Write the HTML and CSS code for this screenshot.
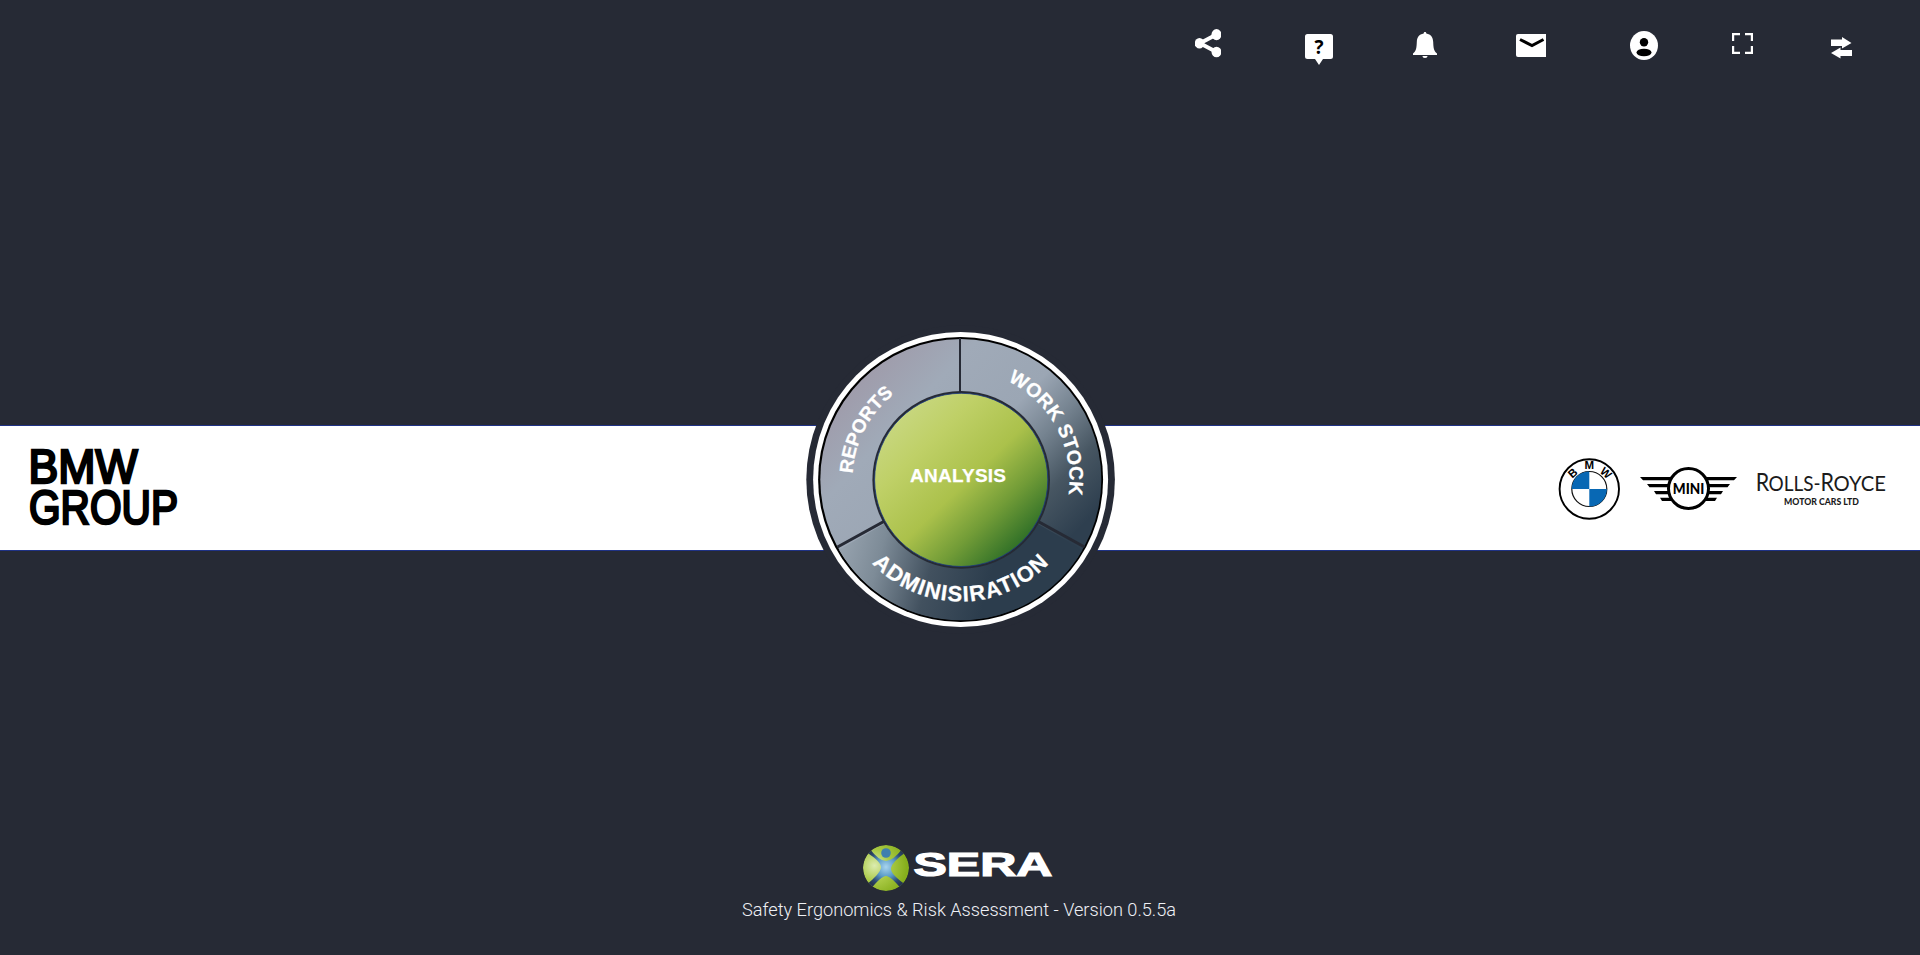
FILE: index.html
```html
<!DOCTYPE html>
<html lang="en">
<head>
<meta charset="utf-8">
<title>SERA</title>
<link rel="stylesheet" href="styles.css">
</head>
<body>
<div class="page">
  <header class="toolbar">
    <svg class="icon icon-share" width="26" height="29" viewBox="0 0 26 29"><path d="M21.500 5.500 5 14.300 21.500 23" fill="none" stroke="#fff" stroke-width="4"/><ellipse cx="4.500" cy="14.300" rx="4.800" ry="5.300"/><ellipse cx="21.500" cy="5.600" rx="5" ry="5.600"/><ellipse cx="21.500" cy="23" rx="5" ry="5.300"/></svg>
    <svg class="icon icon-help" width="28" height="32" viewBox="0 0 28 32"><path d="M2.500 0h23A2.500 2.500 0 0 1 28 2.500v20a2.500 2.500 0 0 1-2.500 2.500H18l-4 6-4-6H2.500A2.500 2.500 0 0 1 0 22.500v-20A2.500 2.500 0 0 1 2.500 0z"/><text class="help-mark" x="14" y="19.500" text-anchor="middle">?</text></svg>
    <svg class="icon icon-bell" width="24" height="27" viewBox="0 0 24 27"><path d="M12 0c1 0 1.300.700 1.300 1.600C18 2.400 20 5.500 20.200 10c.2 5.500.6 9 3.800 11.500V23H0v-1.500C3.200 19 3.600 15.500 3.800 10 4 5.500 6 2.400 10.700 1.600 10.700.700 11 0 12 0zM9.500 24h5c0 1.300-.8 2-2.500 2s-2.500-.7-2.500-2z"/></svg>
    <svg class="icon icon-mail" width="30" height="23" viewBox="0 0 30 23"><path d="M2 0h28v23H2a2 2 0 0 1-2-2V2a2 2 0 0 1 2-2z"/><path d="M4 5.500 16 11.500 27.500 5.500" fill="none" stroke="#000" stroke-width="3"/></svg>
    <svg class="icon icon-user" width="28" height="29" viewBox="0 0 28 29"><ellipse cx="14" cy="14.500" rx="14" ry="14.500"/><circle cx="14" cy="11.300" r="4.200" fill="#000"/><ellipse cx="14" cy="21.500" rx="7.500" ry="3.800" fill="#000"/></svg>
    <svg class="icon icon-full" width="21" height="21" viewBox="0 0 21 21"><path d="M1 8V1h7M13 1h7v7M20 13v7h-7M8 20H1v-7" fill="none" stroke="#fff" stroke-width="2.400"/></svg>
    <svg class="icon icon-swap" width="21" height="22" viewBox="0 0 21 22"><path d="M0 2.500h11V0l9.500 6-9.500 5.500V9H0zM21 13H9.500v-2.500L0 16l9.500 5.500V19H21z"/></svg>
  </header>

  <main class="band">
    <svg class="group-logo" width="150" height="82" viewBox="0 0 150 82"><text x="-1.500" y="34.500" textLength="109" lengthAdjust="spacingAndGlyphs">BMW</text><text x="-1" y="76" textLength="149" lengthAdjust="spacingAndGlyphs">GROUP</text></svg>

    <div class="brands">
      <svg class="brand-bmw" width="62" height="62" viewBox="0 0 62 62">
        <circle cx="31.300" cy="31" r="29.700" fill="#fff" stroke="#000" stroke-width="1.900"/>
        <circle cx="31.300" cy="31" r="17.500" fill="#fff" stroke="#111" stroke-width="1.200"/>
        <path d="M31.300 31V13.400A17.600 17.600 0 0 0 13.700 31zM31.300 31v17.600A17.600 17.600 0 0 0 48.900 31z" fill="#0868b4"/>
        <text text-anchor="middle" x="31.300" y="11.300">M</text>
        <text text-anchor="middle" transform="translate(17.300 18) rotate(-42)">B</text>
        <text text-anchor="middle" transform="translate(45.300 18) rotate(42)">W</text>
      </svg>
      <svg class="brand-mini" width="97" height="44" viewBox="0 0 97 44">
        <path d="M0 10h97l-3 3.300H3zM7 17h83l-2.500 3.300h-78zM14 24h69l-2 3.200H16zM20 30.800h57l-2 3.200H22z"/>
        <circle cx="48.500" cy="21.500" r="20" fill="#fff" stroke="#000" stroke-width="3"/>
        <text x="32.800" y="27.300" textLength="31.500" lengthAdjust="spacingAndGlyphs">MINI</text>
      </svg>
      <svg class="brand-rr" width="130" height="36" viewBox="0 0 130 36">
        <text class="rr-cap" x="-1.300" y="19.500" textLength="13.500" lengthAdjust="spacingAndGlyphs">R</text>
        <text class="rr-name" x="11.500" y="19.500" textLength="52" lengthAdjust="spacingAndGlyphs">OLLS-</text>
        <text class="rr-cap" x="63.500" y="19.500" textLength="13.500" lengthAdjust="spacingAndGlyphs">R</text>
        <text class="rr-name" x="76.500" y="19.500" textLength="52.500" lengthAdjust="spacingAndGlyphs">OYCE</text>
        <text class="rr-sub" x="27" y="33.600" textLength="75" lengthAdjust="spacingAndGlyphs">MOTOR CARS LTD</text>
      </svg>
    </div>

    <svg class="wheel" width="320" height="320" viewBox="0 0 320 320">
      <defs>
        <linearGradient id="ring" gradientUnits="userSpaceOnUse" x1="50" y1="70" x2="240" y2="250">
          <stop offset="0" stop-color="#9f9cab"/><stop offset=".22" stop-color="#a0aab8"/><stop offset=".5" stop-color="#9ba6b4"/><stop offset=".66" stop-color="#74828f"/><stop offset=".82" stop-color="#475662"/><stop offset="1" stop-color="#2e3f4f"/>
        </linearGradient>
        <linearGradient id="admin" gradientUnits="userSpaceOnUse" x1="45" y1="220" x2="190" y2="260">
          <stop offset="0" stop-color="#95a1ad"/><stop offset=".25" stop-color="#7d8b97"/><stop offset=".6" stop-color="#42515f"/><stop offset="1" stop-color="#2c3d4d"/>
        </linearGradient>
        <linearGradient id="core" gradientUnits="userSpaceOnUse" x1="95" y1="90" x2="225" y2="225">
          <stop offset="0" stop-color="#c9d883"/><stop offset=".25" stop-color="#bfd067"/><stop offset=".54" stop-color="#abc14b"/><stop offset=".76" stop-color="#729c37"/><stop offset="1" stop-color="#2a6c26"/>
        </linearGradient>
        <path id="arc-reports" d="M52.500 159.500A108 108 0 0 1 160.500 51.500"/>
        <path id="arc-work" d="M160.500 50.500A109 109 0 0 1 269.500 159.500A109 109 0 0 1 160.500 268.500"/>
        <path id="arc-admin" d="M38.500 159.500A122 122 0 0 0 282.500 159.500"/>
      </defs>
      <circle cx="160.600" cy="159.500" r="154.300" fill="#262a35"/>
      <circle cx="160.600" cy="159.500" r="147.500" fill="#fff"/>
      <circle cx="160.600" cy="159.500" r="142.500" fill="#000"/>
      <circle cx="160.800" cy="159.500" r="140.500" fill="url(#ring)"/>
      <path d="M160.800 159.500 39 229.800A140.500 140.500 0 0 0 282.600 229.800z" fill="url(#admin)"/>
      <path d="M160 160V18" stroke="#262a35" stroke-width="2"/>
      <path d="M37.500 227 161 159 284.500 227" fill="none" stroke="#262a35" stroke-width="3"/>
      <circle cx="161.200" cy="159.900" r="88.800" fill="#262a35"/>
      <circle cx="161.200" cy="159.900" r="86.600" fill="url(#core)" stroke="#1c3a80" stroke-width=".8"/>
      <text class="seg"><textPath href="#arc-reports" startOffset="6">REPORTS</textPath></text>
      <text class="seg seg-work" textLength="138"><textPath href="#arc-work" startOffset="48.500">WORK STOCK</textPath></text>
      <text class="seg seg-admin"><textPath href="#arc-admin" startOffset="92.500">ADMINISIRATION</textPath></text>
      <text class="seg" x="110" y="162.300" textLength="96">ANALYSIS</text>
    </svg>
  </main>

  <footer class="footer">
    <svg class="sera" width="194" height="48" viewBox="0 0 194 48">
      <defs>
        <radialGradient id="ball" cx=".25" cy=".45" r=".7"><stop offset="0" stop-color="#dcecb0"/><stop offset=".5" stop-color="#a9c944"/><stop offset="1" stop-color="#86ae1c"/></radialGradient>
        <radialGradient id="body" gradientUnits="userSpaceOnUse" cx="23" cy="22" r="22"><stop offset="0" stop-color="#a8d4ee"/><stop offset=".45" stop-color="#5a9bc8"/><stop offset=".8" stop-color="#2c4a70"/><stop offset="1" stop-color="#263550"/></radialGradient>
        <clipPath id="ballclip"><circle cx="23" cy="23" r="23"/></clipPath>
      </defs>
      <g clip-path="url(#ballclip)">
        <circle cx="23" cy="23" r="23" fill="url(#ball)"/>
        <path d="M6 3Q16 16 23 16T40 3L43 7Q29 17 28 23T43 40L39 45Q28 31 23 31T7 45L3 40Q17 29 18 23T3 7z" fill="url(#body)"/>
        <circle cx="23" cy="8" r="4.800" fill="#3f7fae"/>
      </g>
      <text class="sera-name" x="50.500" y="31" textLength="139" lengthAdjust="spacingAndGlyphs">SERA</text>
    </svg>
    <svg class="version" width="440" height="26" viewBox="0 0 440 26"><text x="0" y="16.500" textLength="434" lengthAdjust="spacingAndGlyphs">Safety Ergonomics &amp; Risk Assessment - Version 0.5.5a</text></svg>
  </footer>
</div>
</body>
</html>
```

FILE: styles.css
```css
* { box-sizing: border-box; }
body { margin: 0; background: #262a35; font-family: "Liberation Sans", Arial, sans-serif; }
.page { height: 955px; display: flex; flex-direction: column; overflow: hidden; }
svg { display: block; flex: none; overflow: visible; }

.toolbar { height: 425px; padding: 29px 0 0 1195px; display: flex; align-items: flex-start; }
.icon { fill: #fff; overflow: hidden; }
.icon-help { margin: 5px 0 0 84px; }
.icon-bell { margin: 3px 0 0 80px; }
.icon-mail { margin: 5px 0 0 79px; }
.icon-user { margin: 2px 0 0 84px; }
.icon-full { margin: 4px 0 0 74px; }
.icon-swap { margin: 8px 0 0 78px; }
.help-mark { font: bold 19px "Open Sans", sans-serif; fill: #000; }

.band { position: relative; height: 126px; background: #fff; border: solid #1f3285; border-width: 1px 0; display: flex; justify-content: space-between; padding: 22px 33px 0 30px; }
.group-logo { font: 48px "Liberation Sans", Arial, sans-serif; fill: #000; stroke: #000; stroke-width: 2.600; }
.brands { display: flex; padding-top: 10px; }
.brand-bmw { font: bold 11.500px "Liberation Sans", Arial, sans-serif; }
.brand-mini { margin: 9px 0 0 20px; font: 900 15.500px Lato, sans-serif; }
.brand-rr { margin: 13px 0 0 20px; fill: #1b1b1b; }
.rr-name { font: 22px Lato, sans-serif; }
.rr-cap { font: 25px Lato, sans-serif; }
.rr-sub { font: 900 8.800px Lato, sans-serif; }

.wheel { position: absolute; left: 800px; top: -106px; }
.seg { font: bold 19px "Liberation Sans", Arial, sans-serif; fill: #fff; stroke: #fff; stroke-width: .25; }
.seg-work { font-size: 19.500px; }
.seg-admin { font-size: 22px; letter-spacing: 1.250px; }

.footer { flex: 1; display: flex; flex-direction: column; align-items: center; padding-top: 294px; }
.sera-name { font: bold 33px "Liberation Sans", Arial, sans-serif; fill: #fff; stroke: #fff; stroke-width: 1.200; }
.version { margin: 6px 0 0 4px; font: 300 19px Roboto, sans-serif; fill: #eef0f5; }
```
